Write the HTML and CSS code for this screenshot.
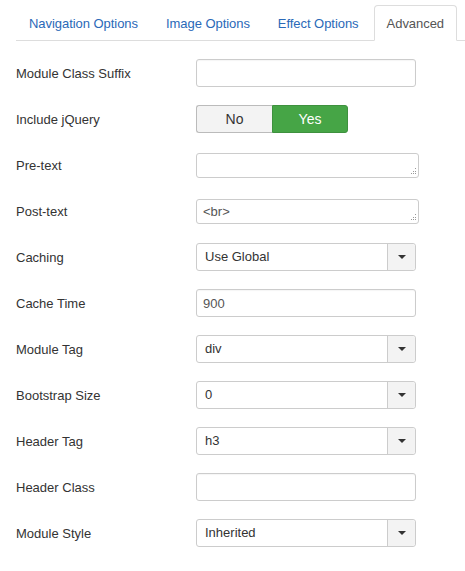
FILE: index.html
```html
<!DOCTYPE html>
<html>
<head>
<meta charset="utf-8">
<link rel="stylesheet" href="styles.css">
</head>
<body>
<ul class="tabs">
  <li class="tab"><a>Navigation Options</a></li>
  <li class="tab"><a>Image Options</a></li>
  <li class="tab"><a>Effect Options</a></li>
  <li class="tab active"><a>Advanced</a></li>
</ul>
<div class="form">
  <div class="row"><label class="lbl">Module Class Suffix</label><input class="inp" type="text" value=""></div>
  <div class="row"><label class="lbl">Include jQuery</label>
    <div class="toggle"><span class="opt no">No</span><span class="opt yes">Yes</span></div>
  </div>
  <div class="row"><label class="lbl">Pre-text</label>
    <div class="ta-wrap"><textarea class="ta"></textarea><svg class="grip" width="7" height="7" viewBox="0 0 7 7"><rect x="5" y="0" width="1" height="1"/><rect x="3" y="3" width="1" height="1"/><rect x="5" y="3" width="1" height="1"/><rect x="1" y="5" width="1" height="1"/><rect x="3" y="5" width="1" height="1"/><rect x="5" y="5" width="1" height="1"/></svg></div>
  </div>
  <div class="row"><label class="lbl">Post-text</label>
    <div class="ta-wrap"><textarea class="ta">&lt;br&gt;</textarea><svg class="grip" width="7" height="7" viewBox="0 0 7 7"><rect x="5" y="0" width="1" height="1"/><rect x="3" y="3" width="1" height="1"/><rect x="5" y="3" width="1" height="1"/><rect x="1" y="5" width="1" height="1"/><rect x="3" y="5" width="1" height="1"/><rect x="5" y="5" width="1" height="1"/></svg></div>
  </div>
  <div class="row"><label class="lbl">Caching</label>
    <div class="sel"><span class="sel-val">Use Global</span><span class="sel-btn"><span class="caret"></span></span></div>
  </div>
  <div class="row"><label class="lbl">Cache Time</label><input class="inp" type="text" value="900"></div>
  <div class="row"><label class="lbl">Module Tag</label>
    <div class="sel"><span class="sel-val">div</span><span class="sel-btn"><span class="caret"></span></span></div>
  </div>
  <div class="row"><label class="lbl">Bootstrap Size</label>
    <div class="sel"><span class="sel-val">0</span><span class="sel-btn"><span class="caret"></span></span></div>
  </div>
  <div class="row"><label class="lbl">Header Tag</label>
    <div class="sel"><span class="sel-val">h3</span><span class="sel-btn"><span class="caret"></span></span></div>
  </div>
  <div class="row"><label class="lbl">Header Class</label><input class="inp" type="text" value=""></div>
  <div class="row"><label class="lbl">Module Style</label>
    <div class="sel"><span class="sel-val">Inherited</span><span class="sel-btn"><span class="caret"></span></span></div>
  </div>
</div>
</body>
</html>
```

FILE: styles.css
```css
* { box-sizing: border-box; }
html, body { margin: 0; padding: 0; background: #fff; }
body {
  font-family: "Liberation Sans", Arial, sans-serif;
  font-size: 13px;
  line-height: 18px;
  color: #333;
}
.tabs {
  list-style: none;
  margin: 5px 0 0 16px;
  padding: 0;
  display: flex;
  border-bottom: 1px solid #ddd;
}
.tab {
  margin-right: 2px;
  margin-bottom: -1px;
}
.tab a {
  display: block;
  padding: 9px 12px 7px;
  line-height: 18px;
  letter-spacing: -0.05px;
  border: 1px solid transparent;
  border-radius: 4px 4px 0 0;
  color: #2a69b8;
}
.tab.active a {
  border-color: #ddd #ddd transparent;
  background: #fff;
  color: #555;
}
.form {
  padding-top: 18px;
}
.row {
  display: flex;
  align-items: center;
  height: 28px;
  margin-bottom: 18px;
}
.lbl {
  width: 196px;
  padding-left: 16px;
  flex: none;
  padding-top: 1px;
}
.inp {
  width: 220px;
  height: 28px;
  padding: 4px 6px;
  border: 1px solid #ccc;
  border-radius: 3px;
  font: inherit;
  color: #555;
  outline: none;
  box-shadow: inset 0 1px 1px rgba(0,0,0,0.04);
}
.toggle {
  display: flex;
  height: 28px;
}
.opt {
  width: 76px;
  display: flex;
  align-items: center;
  justify-content: center;
  font-size: 14px;
  border: 1px solid #bbb;
}
.opt.no {
  background: #f3f3f3;
  color: #333;
  border-right: none;
  border-radius: 3px 0 0 3px;
}
.opt.yes {
  background: #46a546;
  border-color: #3e913e;
  color: #fff;
  border-radius: 0 3px 3px 0;
}
.ta-wrap {
  position: relative;
  width: 223px;
  height: 25px;
  margin-top: 1px;
}
.ta {
  display: block;
  width: 223px;
  height: 25px;
  padding: 3px 6px;
  border: 1px solid #ccc;
  border-radius: 3px;
  font: inherit;
  line-height: 18px;
  color: #555;
  resize: none;
  overflow: hidden;
  outline: none;
}
.grip {
  position: absolute;
  right: 2px;
  bottom: 3px;
  fill: #999;
}
.sel {
  width: 220px;
  height: 28px;
  border: 1px solid #ccc;
  border-radius: 3px;
  display: flex;
  align-items: center;
  background: #fff;
}
.sel-val {
  flex: 1;
  padding-left: 8px;
  color: #333;
}
.sel-btn {
  width: 28px;
  height: 100%;
  border-left: 1px solid #ccc;
  background: #f3f3f3;
  display: flex;
  align-items: center;
  justify-content: center;
  border-radius: 0 3px 3px 0;
}
.caret {
  width: 0;
  height: 0;
  border-left: 4px solid transparent;
  border-right: 4px solid transparent;
  border-top: 4px solid #333;
}
```
